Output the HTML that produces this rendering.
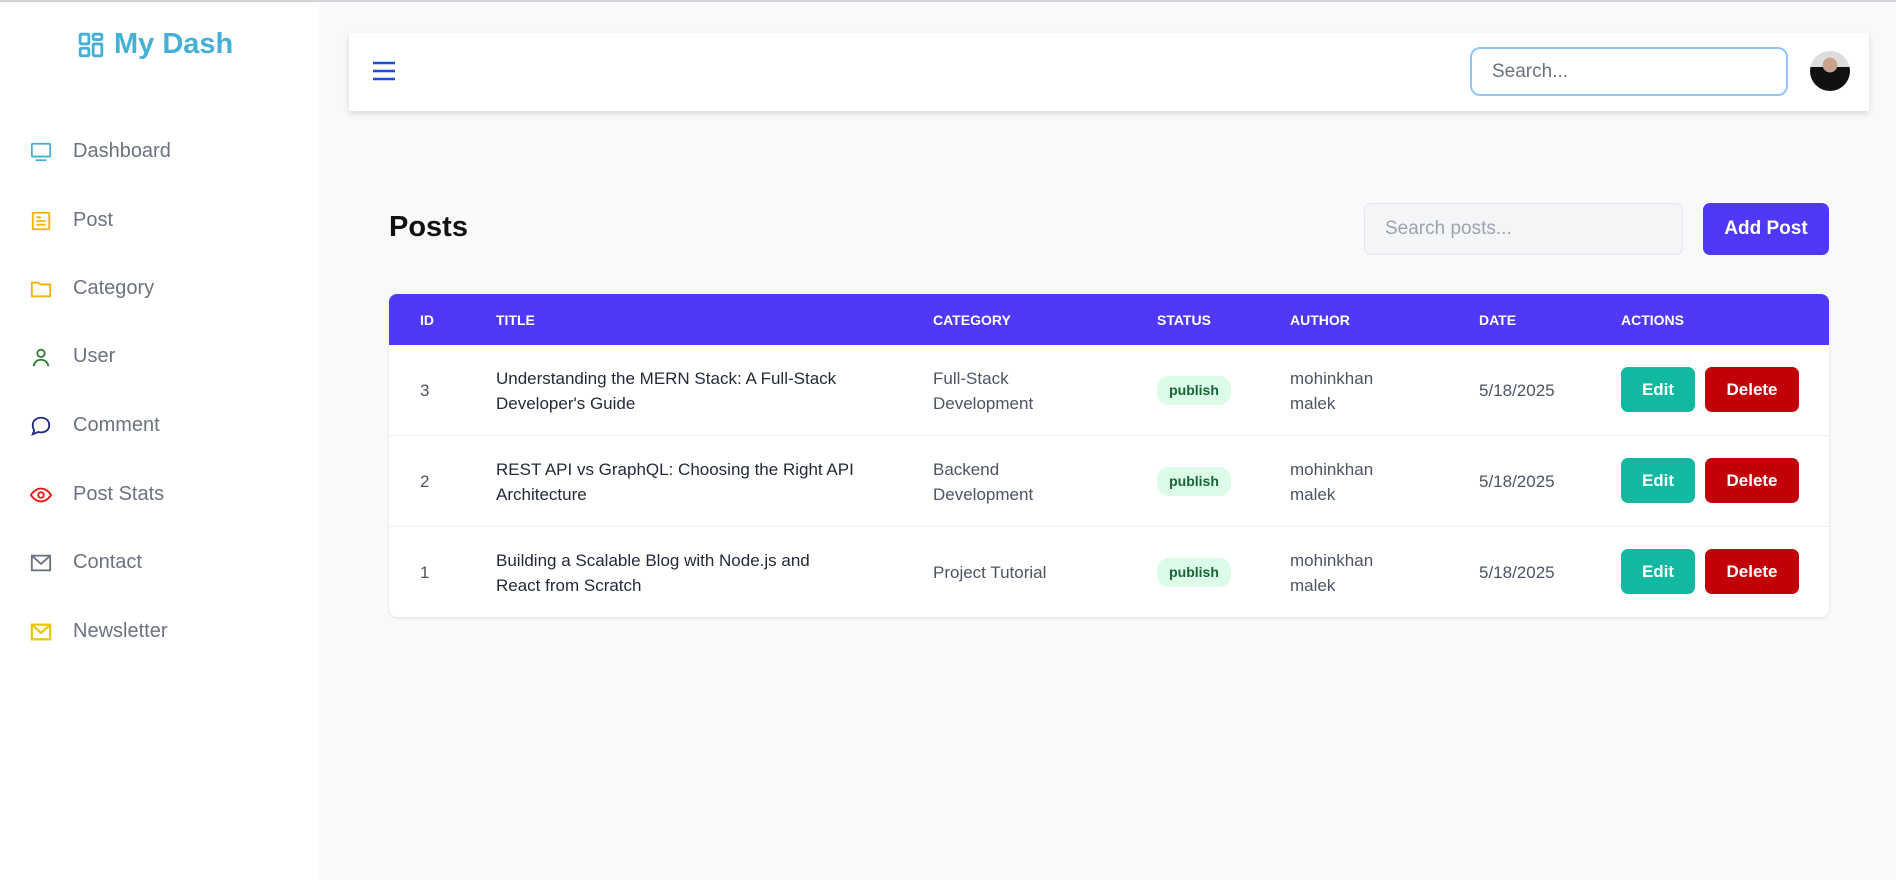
<!DOCTYPE html>
<html><head><meta charset="utf-8"><style>
*{box-sizing:border-box;margin:0;padding:0}
body{width:1896px;height:878px;overflow:hidden;background:#f8f9fa;font-family:"Liberation Sans",sans-serif;position:relative;border-top:2px solid #d4d4d8}
.side{position:absolute;left:0;top:2px;width:319px;height:876px;background:#fff}
.logo{position:absolute;left:78px;top:24px;color:#45b0d6;font-weight:bold;font-size:29px;display:flex;align-items:center;gap:10px}
.nav{position:absolute;left:30px;display:flex;align-items:center;color:#6b7280;font-size:20px}
.nav svg{width:22px;height:22px;margin-right:21px}
.hdr{position:absolute;left:349px;top:31px;width:1520px;height:78px;background:#fff;box-shadow:0 3px 6px rgba(0,0,0,.12)}
.inp{position:absolute;border-radius:10px;font-size:19px;color:#6b7280;padding-left:20px;display:flex;align-items:center}
.posts{position:absolute;left:389px;top:209px;font-size:29px;font-weight:bold;color:#111}
.btn{position:absolute;color:#fff;font-weight:bold;border-radius:7px;display:flex;align-items:center;justify-content:center}
.tbl{position:absolute;left:389px;top:292px;width:1440px;height:323px;background:#fff;border-radius:8px;box-shadow:0 1px 3px rgba(0,0,0,.1);overflow:hidden}
.th{height:51px;background:#4f39f6;position:relative}
.th span{position:absolute;top:18px;color:#fff;font-size:14px;font-weight:bold}
.tr{height:91px;position:relative;border-bottom:1px solid #f0f0f2;font-size:17px;color:#1f2937;line-height:25px}
.tr div{position:absolute}
.c{color:#4b5563}
.badge{background:#dcfce7;color:#166534;font-size:14px;font-weight:bold;border-radius:12px;width:74px;height:29px;text-align:center;line-height:29px}
</style></head><body>
<div class="side">
<div class="logo"><svg width="26" height="26" viewBox="0 0 24 24" fill="none" stroke="#45b0d6" stroke-width="2.6"><rect x="2" y="2" width="8" height="9" rx="1"/><rect x="14" y="2" width="8" height="5" rx="1"/><rect x="14" y="11" width="8" height="11" rx="1"/><rect x="2" y="15" width="8" height="7" rx="1"/></svg>My Dash</div>
<div class="nav" style="top:136px"><svg viewBox="0 0 24 24" fill="none" stroke="#45b0d6" stroke-width="2"><rect x="2" y="3" width="20" height="14" rx="1"/><path d="M6 21h12"/></svg>Dashboard</div>
<div class="nav" style="top:205px"><svg viewBox="0 0 24 24" fill="none" stroke="#f5b301" stroke-width="2"><rect x="3" y="3" width="18" height="18" rx="1"/><path d="M7 8h5M7 12h10M7 16h10"/></svg>Post</div>
<div class="nav" style="top:273px"><svg viewBox="0 0 24 24" fill="none" stroke="#f5b301" stroke-width="2"><path d="M2 5h7l2 2h11v13H2z"/></svg>Category</div>
<div class="nav" style="top:341px"><svg viewBox="0 0 24 24" fill="none" stroke="#2e7d32" stroke-width="2"><circle cx="12" cy="8" r="4"/><path d="M4 22c1-5 4-7 8-7s7 2 8 7"/></svg>User</div>
<div class="nav" style="top:410px"><svg viewBox="0 0 24 24" fill="none" stroke="#1e2a78" stroke-width="2"><path d="M12 3c5 0 9 3 9 8s-4 8-9 8c-1 0-2 0-3-.5L3 21l1.5-4C3.5 15 3 13 3 11c0-5 4-8 9-8z"/></svg>Comment</div>
<div class="nav" style="top:479px"><svg viewBox="0 0 24 24" fill="none" stroke="#e11" stroke-width="2"><path d="M1 12s4-7 11-7 11 7 11 7-4 7-11 7S1 12 1 12z"/><circle cx="12" cy="12" r="3"/></svg>Post Stats</div>
<div class="nav" style="top:547px"><svg viewBox="0 0 24 24" fill="none" stroke="#6b7280" stroke-width="2"><rect x="2" y="4" width="20" height="16"/><path d="M2 4l10 9 10-9"/></svg>Contact</div>
<div class="nav" style="top:616px"><svg viewBox="0 0 24 24" fill="none" stroke="#e6c800" stroke-width="2.4"><rect x="2" y="4" width="20" height="16"/><path d="M2 4l10 9 10-9"/></svg>Newsletter</div>
</div>
<div class="hdr">
<svg style="position:absolute;left:22px;top:26px" width="26" height="24" viewBox="0 0 26 24"><path d="M2 4h22M2 12h22M2 20h22" stroke="#1d4ed8" stroke-width="2.6"/></svg>
<div class="inp" style="left:1121px;top:14px;width:318px;height:49px;border:2px solid #93c5fd">Search...</div>
<div style="position:absolute;left:1461px;top:18px;width:40px;height:40px;border-radius:50%;background:radial-gradient(circle at 50% 35%,#c9a38a 0 22%,transparent 23%),linear-gradient(#ddd 0 40%,#111 40%);overflow:hidden"></div>
</div>
<div class="posts">Posts</div>
<div class="inp" style="left:1364px;top:201px;width:319px;height:52px;border:1px solid #e5e7eb;background:#f4f5f7;border-radius:7px;color:#9ca3af">Search posts...</div>
<div class="btn" style="left:1703px;top:201px;width:126px;height:52px;background:#4f39f6;font-size:19px">Add Post</div>
<div class="tbl">
<div class="th"><span style="left:31px">ID</span><span style="left:107px">TITLE</span><span style="left:544px">CATEGORY</span><span style="left:768px">STATUS</span><span style="left:901px">AUTHOR</span><span style="left:1090px">DATE</span><span style="left:1232px">ACTIONS</span></div>
<div class="tr"><div class="c" style="left:31px;top:33px">3</div><div style="left:107px;top:21px">Understanding the MERN Stack: A Full-Stack<br>Developer's Guide</div><div class="c" style="left:544px;top:21px">Full-Stack<br>Development</div><div class="badge" style="left:768px;top:31px">publish</div><div class="c" style="left:901px;top:21px">mohinkhan<br>malek</div><div class="c" style="left:1090px;top:33px">5/18/2025</div><div class="btn" style="left:1232px;top:22px;width:74px;height:45px;background:#12b8a0;font-size:17px">Edit</div><div class="btn" style="left:1316px;top:22px;width:94px;height:45px;background:#c10007;font-size:17px">Delete</div></div>
<div class="tr"><div class="c" style="left:31px;top:33px">2</div><div style="left:107px;top:21px">REST API vs GraphQL: Choosing the Right API<br>Architecture</div><div class="c" style="left:544px;top:21px">Backend<br>Development</div><div class="badge" style="left:768px;top:31px">publish</div><div class="c" style="left:901px;top:21px">mohinkhan<br>malek</div><div class="c" style="left:1090px;top:33px">5/18/2025</div><div class="btn" style="left:1232px;top:22px;width:74px;height:45px;background:#12b8a0;font-size:17px">Edit</div><div class="btn" style="left:1316px;top:22px;width:94px;height:45px;background:#c10007;font-size:17px">Delete</div></div>
<div class="tr" style="border:none"><div class="c" style="left:31px;top:33px">1</div><div style="left:107px;top:21px">Building a Scalable Blog with Node.js and<br>React from Scratch</div><div class="c" style="left:544px;top:33px">Project Tutorial</div><div class="badge" style="left:768px;top:31px">publish</div><div class="c" style="left:901px;top:21px">mohinkhan<br>malek</div><div class="c" style="left:1090px;top:33px">5/18/2025</div><div class="btn" style="left:1232px;top:22px;width:74px;height:45px;background:#12b8a0;font-size:17px">Edit</div><div class="btn" style="left:1316px;top:22px;width:94px;height:45px;background:#c10007;font-size:17px">Delete</div></div>
</div>
</body></html>
